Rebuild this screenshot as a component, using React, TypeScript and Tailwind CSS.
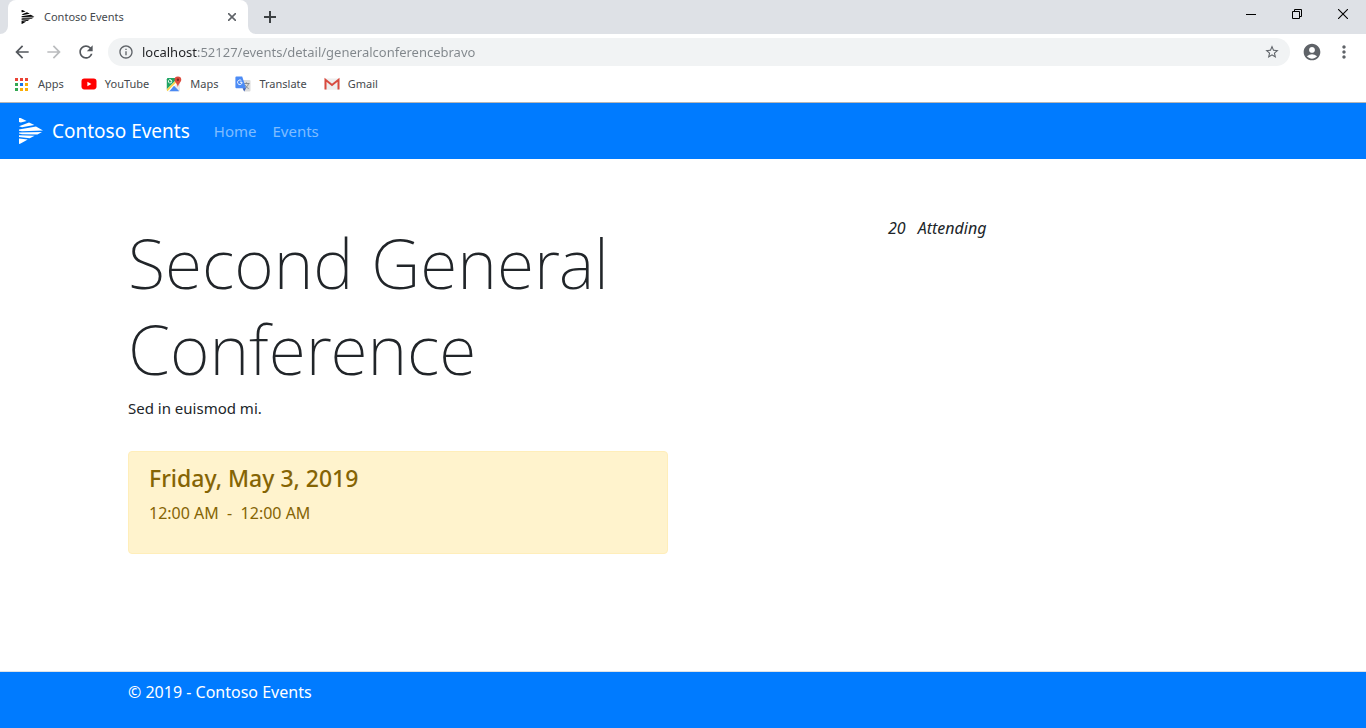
import type { ReactNode } from "react";
import {
  MdAccountCircle,
  MdArrowBack,
  MdArrowForward,
  MdMoreVert,
  MdOutlineInfo,
  MdRefresh,
  MdStarBorder,
} from "react-icons/md";

function ContosoLogo({ className }: { className: string }) {
  return (
    <svg viewBox="0 0 24 26" className={className} fill="currentColor" aria-hidden="true">
      <path d="M0 0 L1.6 0 L7.6 3 L1.8 4.4 L0 4Z" />
      <path d="M2 7.400 L10 4.400 L15.400 7 L3 9.200 L0 8.200 Z" />
      <path d="M0 11.600 L17 8.600 L24 12.600 L3 13.200 L0 12.800Z" />
      <path d="M0 14.400 L23 14 L18.400 16.400 L3 16.200 L0 15.600Z" />
      <path d="M0 17.200 L15.600 17.800 L10.800 20.200 L0 19Z" />
      <path d="M0 20.400 L8.800 21.400 L1.600 25.600 L0 26Z" />
    </svg>
  );
}

function AppsIcon() {
  const colors = ["#ea4335", "#ea4335", "#ea4335", "#34a853", "#1a73e8", "#fbad05", "#34a853", "#fbad05", "#fbad05"];
  return (
    <svg viewBox="0 0 13 13" className="mr-0.5 ml-px h-[13px] w-[13px]" shapeRendering="crispEdges" aria-hidden="true">
      {colors.map((color, i) => (
        <rect key={i} x={(i % 3) * 5} y={Math.floor(i / 3) * 5} width="3" height="3" fill={color} />
      ))}
    </svg>
  );
}

function YouTubeIcon() {
  return (
    <svg viewBox="0 0 16 16" className="h-4 w-4" aria-hidden="true">
      <rect x="0.5" y="2.6" width="15" height="10.8" rx="2.8" fill="#f00" />
      <path d="M6.4 5.7v4.6l4-2.3z" fill="#fff" />
    </svg>
  );
}

function MapsIcon() {
  return (
    <svg viewBox="0 0 16 16" className="h-4 w-4" aria-hidden="true">
      <clipPath id="map-sheet">
        <rect x="0.8" y="2" width="13.2" height="13.2" rx="1.2" />
      </clipPath>
      <g clipPath="url(#map-sheet)">
        <rect width="16" height="16" fill="#e8e8e8" />
        <path d="M0 0h14L0 14z" fill="#1fa463" />
        <path d="M1 16 14 3" stroke="#fff" strokeWidth="2.4" />
        <path d="M0 15.4 12 3.4" stroke="#fdd54b" strokeWidth="1.8" />
        <path d="M2.8 16 8 9.8 14 16z" fill="#4a89f3" />
      </g>
      <path d="M6 4.6H4.4M5.8 5.2A1.7 1.7 0 1 1 5.2 4" stroke="#fff" strokeWidth="0.9" fill="none" />
      <path d="M11.9.4a3.4 3.4 0 0 1 3.4 3.4c0 2.4-2.6 3.4-3.4 7.2-.8-3.8-3.4-4.8-3.4-7.2A3.4 3.4 0 0 1 11.9.4z" fill="#dd4b3e" />
      <circle cx="11.9" cy="3.7" r="1.2" fill="#822820" />
    </svg>
  );
}

function TranslateIcon() {
  return (
    <svg viewBox="0 0 16 16" className="h-4 w-4" aria-hidden="true">
      <path d="M7 4h7.5a1 1 0 0 1 1 1v9.5a1 1 0 0 1-1 1H9z" fill="#dcdcdc" />
      <path d="M8.5 7.5h6M11.4 6.3v1.2M13.5 7.6c-.5 2.3-2 3.9-3.8 4.9M10 8.9c.6 1.6 2 2.8 3.7 3.6" stroke="#7f868c" strokeWidth="0.9" fill="none" />
      <path d="M1.4.6h5.8L11 12.200H1.400a1 1 0 0 1-1-1V1.600a1 1 0 0 1 1-1z" fill="#4c8bf5" />
      <path d="m7.6 12.2 1.6 3.3 1.8-3.3z" fill="#3a5fb5" />
      <path d="M4.900 6.200H7c0 1.500-.8 2.400-2.200 2.400A2.300 2.300 0 1 1 6.300 4.500" stroke="#fff" strokeWidth="1" fill="none" />
    </svg>
  );
}

function GmailIcon() {
  return (
    <svg viewBox="0 0 16 16" className="h-4 w-4" aria-hidden="true">
      <rect x="0.5" y="2.5" width="15" height="11.2" rx="1" fill="#eee" />
      <path d="M1.5 13.6V3.8L8 9l6.5-5.2v9.8" stroke="#d84a3f" strokeWidth="2" fill="none" />
    </svg>
  );
}

const bookmarks: { label: string; icon: ReactNode }[] = [
  { label: "Apps", icon: <AppsIcon /> },
  { label: "YouTube", icon: <YouTubeIcon /> },
  { label: "Maps", icon: <MapsIcon /> },
  { label: "Translate", icon: <TranslateIcon /> },
  { label: "Gmail", icon: <GmailIcon /> },
];

function TabStrip() {
  return (
    <div className="flex h-[34px] items-stretch bg-[#dee1e6]">
      <svg viewBox="0 0 8 8" className="h-2 w-2 self-end" fill="#fff" aria-hidden="true">
        <path d="M8 0v8H0a8 8 0 0 0 8-8z" />
      </svg>
      <div className="flex w-60 items-center rounded-t-lg bg-white pr-2 pl-3">
        <ContosoLogo className="mx-px h-[14px] w-[14px] text-black" />
        <span className="ml-2 flex-1 text-[11px] text-[#45494d]">Contoso Events</span>
        <button type="button" aria-label="Close tab" className="flex h-4 w-4 items-center justify-center">
          <svg viewBox="0 0 8 8" className="h-2 w-2" stroke="#5f6368" strokeWidth="1.6" aria-hidden="true">
            <path d="m0 0 8 8M8 0 0 8" />
          </svg>
        </button>
      </div>
      <svg viewBox="0 0 8 8" className="h-2 w-2 self-end" fill="#fff" aria-hidden="true">
        <path d="M0 0v8h8a8 8 0 0 1-8-8z" />
      </svg>
      <button type="button" aria-label="New tab" className="flex w-7 items-center justify-center">
        <svg viewBox="0 0 12 12" className="h-3 w-3" stroke="#3c4043" strokeWidth="2" aria-hidden="true">
          <path d="M6 0v12M0 6h12" />
        </svg>
      </button>
      <div className="ml-auto flex h-7 text-black">
        <button type="button" aria-label="Minimize" className="flex w-[46px] items-center justify-center">
          <svg viewBox="0 0 10 10" className="h-[10px] w-[10px]" stroke="currentColor" fill="none" aria-hidden="true">
            <path d="M0 5.5h10" />
          </svg>
        </button>
        <button type="button" aria-label="Restore" className="flex w-[46px] items-center justify-center">
          <svg viewBox="0 0 10 10" className="h-[10px] w-[10px]" stroke="currentColor" fill="none" aria-hidden="true">
            <path d="M.5 2.5h7v7h-7zM2.5 2.5v-2h7v7h-2" />
          </svg>
        </button>
        <button type="button" aria-label="Close" className="flex w-[46px] items-center justify-center">
          <svg viewBox="0 0 10 10" className="h-[10px] w-[10px]" stroke="currentColor" strokeWidth="1.1" aria-hidden="true">
            <path d="m0 0 10 10M10 0 0 10" />
          </svg>
        </button>
      </div>
    </div>
  );
}

function Toolbar() {
  return (
    <div className="flex h-9 items-center px-3">
      <div className="flex gap-3 text-[#54585d]">
        <button type="button" aria-label="Back">
          <MdArrowBack className="h-5 w-5" />
        </button>
        <button type="button" aria-label="Forward" className="text-[#babcbe]">
          <MdArrowForward className="h-5 w-5" />
        </button>
        <button type="button" aria-label="Reload">
          <MdRefresh className="h-5 w-5" />
        </button>
      </div>
      <div className="ml-3 flex h-7 flex-1 items-center rounded-full bg-[#f1f3f4] px-[10px] text-[#5f6368]">
        <MdOutlineInfo className="h-4 w-4" />
        <input
          type="text"
          aria-label="Address"
          defaultValue="localhost:52127/events/detail/generalconferencebravo"
          className="ml-2 h-7 flex-1 bg-[linear-gradient(to_right,#202124_56px,#80868b_56px)] bg-clip-text text-[13px] text-transparent outline-none"
        />
        <button type="button" aria-label="Bookmark this page">
          <MdStarBorder className="h-4 w-4" />
        </button>
      </div>
      <button type="button" aria-label="Profile" className="ml-3 text-[#5f6368]">
        <MdAccountCircle className="h-5 w-5" />
      </button>
      <button type="button" aria-label="Menu" className="ml-3 text-[#5f6368]">
        <MdMoreVert className="h-5 w-5" />
      </button>
    </div>
  );
}

function BookmarksBar() {
  return (
    <nav aria-label="Bookmarks" className="flex h-[33px] items-start gap-[17px] border-b border-[#b6b6b6] pt-[6px] pl-[14px]">
      {bookmarks.map(({ label, icon }) => (
        <a key={label} href="#" className="flex items-center gap-2 text-[11px] leading-4 text-[#45494d]">
          {icon}
          {label}
        </a>
      ))}
    </nav>
  );
}

export default function App() {
  return (
    <div className="flex min-h-screen flex-col bg-white font-['Noto_Sans',sans-serif] text-[16px] leading-6 text-[#212529]">
      <header>
        <TabStrip />
        <Toolbar />
        <BookmarksBar />
        <nav aria-label="Main" className="flex h-14 items-center bg-[#007bff] px-4">
          <a href="#" className="flex items-center text-[19px] text-white">
            <ContosoLogo className="mx-[3px] h-[26px] w-6" />
            <span className="ml-[6px]">Contoso Events</span>
          </a>
          <div className="ml-6 flex gap-4 text-[15px] text-white/50">
            <a href="#">Home</a>
            <a href="#">Events</a>
          </div>
        </nav>
      </header>

      <main className="mx-auto grid w-full max-w-[1140px] flex-1 grid-cols-12 content-start gap-[30px] px-[15px] pt-[57px]">
        <section className="col-span-6 pt-1">
          <h1 className="text-[68px] leading-[86px] font-extralight">Second General Conference</h1>
          <p className="mt-1 text-[15px]">Sed in euismod mi.</p>
          <div className="mt-[31px] rounded border border-[#ffeeba] bg-[#fff3cd] px-5 py-3 text-[#856404]">
            <h2 className="text-[23px] leading-[29px] font-medium">Friday, May 3, 2019</h2>
            <p className="mt-2 mb-4 whitespace-pre">{"12:00 AM  -  12:00 AM"}</p>
          </div>
        </section>
        <aside className="col-span-4 col-start-9">
          <p className="flex gap-3 italic">
            <span>20</span>
            <span>Attending</span>
          </p>
        </aside>
      </main>

      <footer className="h-[57px] border-t border-[#dee2e6] bg-[#007bff] text-white">
        <div className="mx-auto w-full max-w-[1140px] px-[15px] pt-2">© 2019 - Contoso Events</div>
      </footer>
    </div>
  );
}
